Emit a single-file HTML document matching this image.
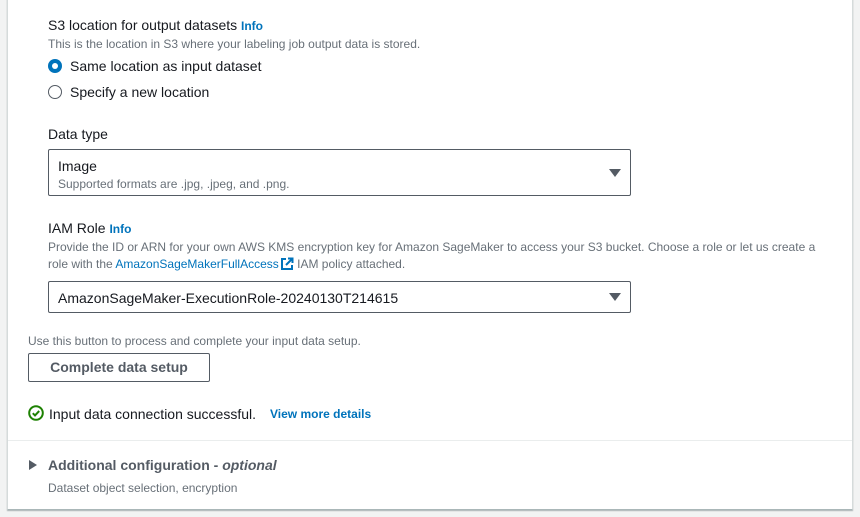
<!DOCTYPE html>
<html><head><style>
body{margin:0;width:860px;height:517px;background:#f2f3f3;font-family:"Liberation Sans",sans-serif;color:#16191f;position:relative;overflow:hidden}
.panel{position:absolute;left:7px;top:-2px;width:844px;height:511px;background:#fff;border-left:1px solid #d5dbdb;border-right:1px solid #d5dbdb;border-bottom:1px solid #aab7b8;box-shadow:0 1px 1px rgba(0,28,36,.3)}
.a{position:absolute;white-space:nowrap}
.l{font-size:14px}
.d{font-size:12px;color:#687078}
.info{color:#0073bb;font-weight:bold;font-size:12px}
.sel{position:absolute;left:48px;width:581px;border:1px solid #545b64;border-radius:2px;background:#fff}
.tri{position:absolute;right:9px;width:0;height:0;border-left:6px solid transparent;border-right:6px solid transparent;border-top:8px solid #545b64}
</style></head><body>
<div class="panel"></div>
<div class="a l" style="left:48px;top:17px">S3 location for output datasets <span class="info">Info</span></div>
<div class="a d" style="left:48px;top:37px">This is the location in S3 where your labeling job output data is stored.</div>
<div class="a" style="left:48px;top:59px;width:14px;height:14px;border-radius:50%;background:#0073bb"><div style="position:absolute;left:4px;top:4px;width:6px;height:6px;border-radius:50%;background:#fff"></div></div>
<div class="a l" style="left:70px;top:58px">Same location as input dataset</div>
<div class="a" style="left:48px;top:85px;width:12px;height:12px;border-radius:50%;border:1px solid #545b64"></div>
<div class="a l" style="left:70px;top:84px">Specify a new location</div>
<div class="a l" style="left:48px;top:126px">Data type</div>
<div class="sel" style="top:149px;height:45px">
<div class="a l" style="left:9px;top:8px">Image</div>
<div class="a d" style="left:9px;top:27px">Supported formats are .jpg, .jpeg, and .png.</div>
<div class="tri" style="top:19px"></div></div>
<div class="a l" style="left:48px;top:220px">IAM Role <span class="info">Info</span></div>
<div class="a d" style="left:48px;top:240px">Provide the ID or ARN for your own AWS KMS encryption key for Amazon SageMaker to access your S3 bucket. Choose a role or let us create a</div>
<div class="a d" style="left:48px;top:257px">role with the <span style="color:#0073bb">AmazonSageMakerFullAccess</span><svg width="14" height="14" viewBox="0 0 14 14" style="vertical-align:-3px;margin-left:1px"><path d="M6 2H2v10h10V8" fill="none" stroke="#0073bb" stroke-width="2"/><path d="M8 1.5h4.5V6M12.5 1.5L6 8" fill="none" stroke="#0073bb" stroke-width="2"/></svg> IAM policy attached.</div>
<div class="sel" style="top:281px;height:30px">
<div class="a l" style="left:9px;top:8px">AmazonSageMaker-ExecutionRole-20240130T214615</div>
<div class="tri" style="top:11px"></div></div>
<div class="a d" style="left:28px;top:334px">Use this button to process and complete your input data setup.</div>
<div class="a" style="left:28px;top:353px;width:180px;height:27px;border:1px solid #545b64;border-radius:2px;text-align:center;line-height:27px;font-size:14px;font-weight:bold;color:#545b64">Complete data setup</div>
<svg class="a" style="left:28px;top:405px" width="16" height="16" viewBox="0 0 16 16"><circle cx="8" cy="8" r="6.8" fill="none" stroke="#1d8102" stroke-width="2"/><path d="M4.8 8.2l2.2 2.2 4.2-4.4" fill="none" stroke="#1d8102" stroke-width="2"/></svg>
<div class="a l" style="left:49px;top:406px">Input data connection successful.</div>
<div class="a" style="left:270px;top:407px;font-size:12px;font-weight:bold;color:#0073bb">View more details</div>
<div class="a" style="left:8px;top:440px;width:844px;height:1px;background:#eaeded"></div>
<div class="a" style="left:29px;top:460px;width:0;height:0;border-top:5px solid transparent;border-bottom:5px solid transparent;border-left:8px solid #545b64"></div>
<div class="a" style="left:48px;top:457px;font-size:14px;font-weight:bold;color:#545b64">Additional configuration - <i>optional</i></div>
<div class="a d" style="left:48px;top:481px">Dataset object selection, encryption</div>
</body></html>
